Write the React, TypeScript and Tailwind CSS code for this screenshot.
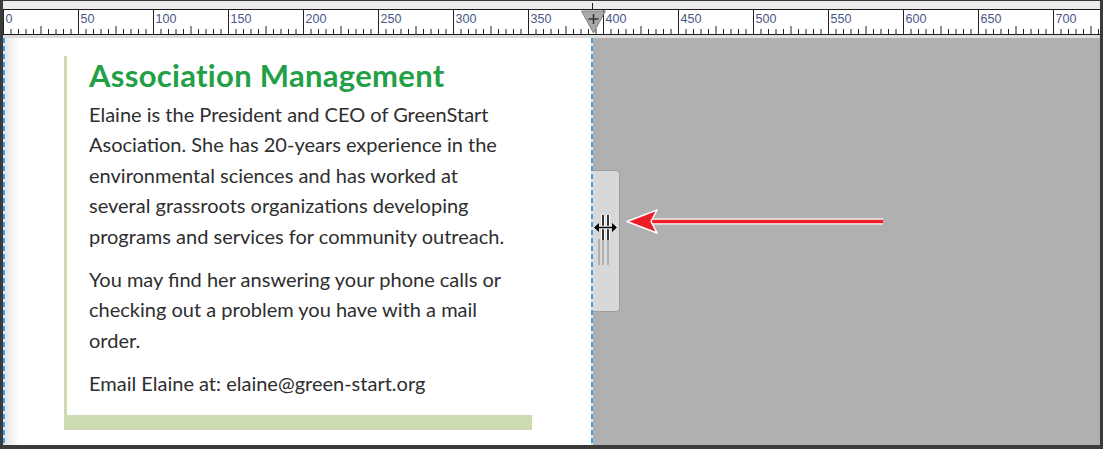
import React from 'react';

const font = { fontFamily: '"Lato", "Liberation Sans", sans-serif' };

// ruler: 1.5px per unit, 0 at x=3.5
const ux = (u: number) => 0.5 + u * 1.5;

function Ruler() {
    const ticks: React.ReactNode[] = [];
    for (let u = 0; u <= 730; u += 5) {
        const x = ux(u);
        const major = u % 50 === 0;
        const mid = u % 25 === 0 && !major;
        const h = major ? 24 : mid ? 8 : 5;
        ticks.push(<line key={u} x1={x} x2={x} y1={24 - h} y2={24} stroke="#222" strokeWidth={1} />);
        if (major) {
            ticks.push(
                <text key={'t' + u} x={x + 2} y={13} fontSize={12.5} fill="#4a5688" fontFamily="Liberation Sans, sans-serif">
                    {u}
                </text>
            );
        }
    }
    return (
        <svg width="1097" height="24" className="block">
            {ticks}
            {/* marker */}
            <path d="M578.5 1 L602.5 1 L590.5 23 Z" fill="#9a9a9a" stroke="#6b6b6b" strokeWidth="1" opacity="0.85" />
            <path d="M590.5 4 V14 M585.5 9 H595.5" stroke="#333" strokeWidth="1.5" />
        </svg>
    );
}

function Handle() {
    return (
        <div className="relative mt-[132px] h-[142px] w-[27px] rounded-r-[4px] border border-l-0 border-[#9e9e9e] bg-[#d8d8d8]">
            <svg width="27" height="142" className="absolute left-0 top-[-1px]">
                <path d="M6 69 V95 M10 69 V95 M15 69 V95" stroke="#8a8a8a" strokeWidth="1" />
                <path d="M10 45 V70 M15 45 V70" stroke="#fff" strokeWidth="4" />
                <path d="M10 45 V70 M15 45 V70" stroke="#000" strokeWidth="1.6" />
                <path d="M1 57.5 H24" stroke="#fff" strokeWidth="3.5" />
                <path d="M2 57.5 H23" stroke="#000" strokeWidth="1.6" />
                <path d="M1 57.5 L6 53 V62 Z M24 57.5 L19 53 V62 Z" fill="#000" />
            </svg>
        </div>
    );
}

export default function App() {
    return (
        <div className="flex h-[449px] w-[1103px] flex-col border-x-[3px] border-t border-b-[4px] border-[#3a3a3a] bg-white" style={font}>
            <div className="relative h-[9px] border-b-[1.5px] border-[#1a1a1a] bg-[#ececec]">
                <div className="absolute left-[589px] top-[2px] h-[7px] w-px bg-[#222]" />
            </div>
            <div className="h-[25px] border-b border-[#1a1a1a] bg-white">
                <Ruler />
            </div>
            <div className="h-[3px] bg-[#dcdcdc]" />
            <div className="flex flex-1 overflow-hidden">
                <div className="relative w-[590px] shrink-0 bg-white">
                    <div className="absolute inset-y-0 left-0 w-[2px] bg-[repeating-linear-gradient(to_bottom,#3aa3e3_0,#3aa3e3_5px,#e4e4e4_5px,#e4e4e4_8px)]" />
                    <div className="absolute inset-y-0 left-[2px] w-[14px] bg-gradient-to-r from-[#e6e6e6] to-white" />
                    <div className="absolute inset-y-0 right-0 w-[2px] bg-[repeating-linear-gradient(to_bottom,#3aa3e3_0,#3aa3e3_5px,#e4e4e4_5px,#e4e4e4_8px)]" />
                    <div className="relative ml-[61px] mt-[18px] w-[468px] border-b-[15px] border-l-[3px] border-[#cddbb0] pb-[16px] pl-[22px]">
                        <h1 className="text-[31px] font-bold leading-[38px] tracking-[0.3px] text-[#22a046]">Association Management</h1>
                        <div className="mt-[5px] text-[20px] leading-[30.4px] text-[#2e2e2e]">
                            <p>
                                <span className="block">Elaine is the President and CEO of GreenStart</span>
                                <span className="block">Asociation. She has 20-years experience in the</span>
                                <span className="block">environmental sciences and has worked at</span>
                                <span className="block">several grassroots organizations developing</span>
                                <span className="block">programs and services for community outreach.</span>
                            </p>
                            <p className="mt-[13px]">
                                <span className="block">You may find her answering your phone calls or</span>
                                <span className="block">checking out a problem you have with a mail</span>
                                <span className="block">order.</span>
                            </p>
                            <p className="mt-[13px]">Email Elaine at: elaine@green-start.org</p>
                        </div>
                    </div>
                </div>
                <div className="relative flex flex-1 bg-[#b0b0b0]">
                    <Handle />
                    <svg width="300" height="40" className="absolute left-[30px] top-[165px]">
                        <path d="M28 18.5 H260" stroke="#fff" strokeWidth="6" />
                        <path d="M28 18.5 H260" stroke="#ee1c25" strokeWidth="3.5" />
                        <path d="M4 18.5 L34 7 L28 18.5 L34 30 Z" fill="#ee1c25" stroke="#fff" strokeWidth="1.5" strokeLinejoin="round" />
                    </svg>
                </div>
            </div>
        </div>
    );
}
